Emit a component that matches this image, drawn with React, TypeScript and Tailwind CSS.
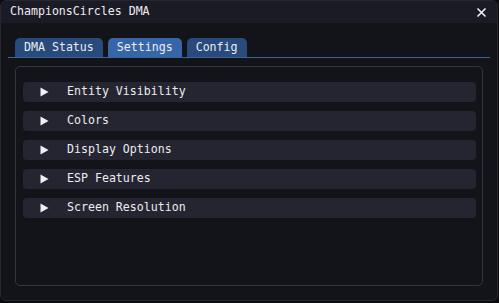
import React from "react";

const mono = { fontFamily: '"DejaVu Sans Mono", "Liberation Mono", monospace' };

const tabs = [
  { label: "DMA Status", active: false },
  { label: "Settings", active: true },
  { label: "Config", active: false },
];

const sections = ["Entity Visibility", "Colors", "Display Options", "ESP Features", "Screen Resolution"];

export default function App() {
  return (
    <div className="w-[499px] h-[303px] bg-[#0b0b0f] overflow-hidden text-[11.6px] text-[#ececf0]" style={mono}>
      <div className="w-[498px] h-[301px] rounded-[6px] border border-[#262631] bg-[#13131a] flex flex-col overflow-hidden">
        {/* title bar */}
        <div className="h-[22px] shrink-0 bg-[#1b1b26] flex items-center justify-between pl-[9px] pr-[9px]">
          <span className="leading-none">ChampionsCircles DMA</span>
          <svg width="11" height="11" viewBox="0 0 11 11" className="mr-[1px]">
            <path d="M1.5 1.5 L9.5 9.5 M9.5 1.5 L1.5 9.5" stroke="#f0f0f4" strokeWidth="1.6" />
          </svg>
        </div>

        <div className="flex-1 flex flex-col px-[7px] pt-[15px] pb-[14px]">
          {/* tab bar */}
          <div className="flex gap-[5px] pl-[7px] border-b border-[#3b6398]">
            {tabs.map((t) => (
              <div
                key={t.label}
                className={`h-[19px] px-[9px] flex items-center rounded-t-[5px] leading-none ${
                  t.active ? "bg-[#3766a8]" : "bg-[#284a7c]"
                }`}
              >
                {t.label}
              </div>
            ))}
          </div>

          {/* child region */}
          <div className="flex-1 mt-[8px] mx-[7px] rounded-[5px] border border-[#343442] pt-[15px] pl-[7px] pr-[6px] flex flex-col gap-[9px]">
            {sections.map((s) => (
              <div key={s} className="h-[20px] rounded-[4px] bg-[#252532] flex items-center pl-[17px]">
                <svg width="9" height="10" viewBox="0 0 9 10" className="shrink-0">
                  <path d="M0.5 0.5 L8.5 5 L0.5 9.5 Z" fill="#f0f0f4" />
                </svg>
                <span className="ml-[18px] leading-none">{s}</span>
              </div>
            ))}
          </div>
        </div>
      </div>
    </div>
  );
}
